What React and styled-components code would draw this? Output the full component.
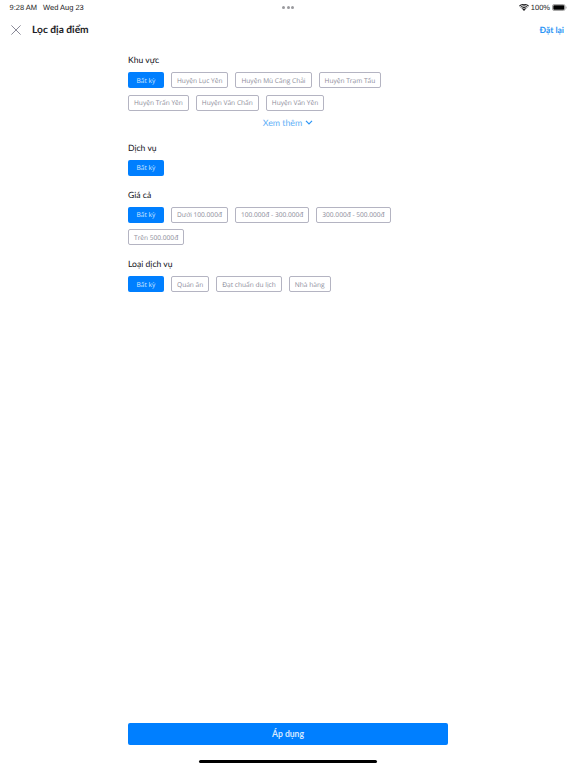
import React from "react";
import styled, { createGlobalStyle } from "styled-components";

const Global = createGlobalStyle`
  html, body { margin: 0; padding: 0; background: #fff; }
  body { font-family: "Lato", "Open Sans", sans-serif; text-rendering: geometricPrecision; }
  * { box-sizing: border-box; }
`;

const Page = styled.div`
  position: relative;
  width: 576px;
  height: 768px;
  display: flex;
  flex-direction: column;
  background: #fff;
  overflow: hidden;
`;

const StatusBar = styled.div`
  height: 14px;
  padding: 0 9px 0 9.5px;
  display: grid;
  grid-template-columns: 1fr auto 1fr;
  align-items: center;
  font-family: "Liberation Sans", sans-serif;
  font-size: 7.5px;
  color: #1c1c1e;
`;

const StatusLeft = styled.div`
  display: flex;
  gap: 6px;
`;

const StatusRight = styled.div`
  display: flex;
  justify-content: flex-end;
  align-items: center;
  gap: 2px;
`;

const Dots = styled.div`
  display: flex;
  gap: 1.5px;
`;

const Dot = styled.span`
  width: 3px;
  height: 3px;
  border-radius: 50%;
  background: #9a9a9e;
`;

const Header = styled.header`
  height: 31px;
  padding: 0 12px 0 11px;
  display: flex;
  align-items: center;
`;

const CloseButton = styled.span`
  display: flex;
  width: 10px;
  height: 10px;
  margin-right: 11px;
`;

const Title = styled.h1`
  flex: 1;
  margin: 0;
  font-size: 10.2px;
  font-weight: 700;
  color: #1d1d26;
`;

const Reset = styled.span`
  font-size: 8.5px;
  font-weight: 700;
  color: #2b95f5;
`;

const Content = styled.main`
  width: 320px;
  margin: 0 auto;
  padding-top: 9px;
  flex: 1;
`;

const Section = styled.section`
  margin-bottom: 13px;
`;

const SectionTitle = styled.h2`
  margin: 0 0 6px;
  font-size: 8.6px;
  line-height: 12px;
  font-weight: 400;
  color: #14141c;
`;

const Chips = styled.div`
  display: flex;
  flex-wrap: wrap;
  gap: 6.5px 7px;
`;

const Chip = styled.span`
  height: 16px;
  padding: 0 ${(p) => (p.$active ? "0" : "5px")};
  min-width: 36px;
  display: inline-flex;
  align-items: center;
  justify-content: center;
  border-radius: 2px;
  font-family: "Open Sans", sans-serif;
  font-size: 6.6px;
  white-space: nowrap;
  background: ${(p) => (p.$active ? "#007fff" : "#fff")};
  color: ${(p) => (p.$active ? "#d6e9ff" : "#8b8b99")};
  border: ${(p) => (p.$active ? "none" : "1px solid #b4b4c2")};
`;

const More = styled.div`
  margin-top: 6px;
  display: flex;
  justify-content: center;
  align-items: center;
  gap: 3px;
  height: 12px;
  font-size: 8.8px;
  color: #5fb0f7;
`;

const Footer = styled.footer`
  width: 320px;
  margin: 0 auto 23px;
`;

const Apply = styled.button`
  width: 100%;
  height: 22px;
  padding: 0;
  border: none;
  border-radius: 2px;
  background: #007fff;
  color: #d6e9ff;
  font-family: inherit;
  font-size: 8.6px;
  font-weight: 700;
`;

const HomeIndicator = styled.div`
  position: absolute;
  left: 199px;
  top: 760px;
  width: 178px;
  height: 3px;
  border-radius: 2px;
  background: #000;
`;

const sections = [
  { title: "Khu vực", more: true, chips: ["Huyện Lục Yên", "Huyện Mù Căng Chải", "Huyện Trạm Tấu", "Huyện Trấn Yên", "Huyện Văn Chấn", "Huyện Văn Yên"] },
  { title: "Dịch vụ", chips: [] },
  { title: "Giá cả", chips: ["Dưới 100.000đ", "100.000đ - 300.000đ", "300.000đ - 500.000đ", "Trên 500.000đ"] },
  { title: "Loại dịch vụ", chips: ["Quán ăn", "Đạt chuẩn du lịch", "Nhà hàng"] },
];

export default function App() {
  return (
    <Page>
      <Global />
      <StatusBar>
        <StatusLeft>
          <span>9:28 AM</span>
          <span>Wed Aug 23</span>
        </StatusLeft>
        <Dots>
          <Dot />
          <Dot />
          <Dot />
        </Dots>
        <StatusRight>
          <svg width="10" height="7" viewBox="0 0 10 7">
            <path d="M5 7 3.4 5.2a2.4 2.4 0 0 1 3.2 0Z" fill="#1c1c1e" />
            <path d="M2.5 4.2a3.8 3.8 0 0 1 5 0l-.6.7a3 3 0 0 0-3.8 0Z" fill="#1c1c1e" />
            <path d="M1.3 3A5.6 5.6 0 0 1 8.7 3l-.6.7a4.7 4.7 0 0 0-6.2 0Z" fill="#1c1c1e" />
            <path d="M0 1.8A7.5 7.5 0 0 1 10 1.8l-.6.7a6.6 6.6 0 0 0-8.8 0Z" fill="#1c1c1e" />
          </svg>
          <span>100%</span>
          <svg width="15" height="7" viewBox="0 0 15 7">
            <rect x=".5" y=".5" width="12.5" height="6" rx="1.5" fill="none" stroke="#a8a8a8" />
            <rect x="1.3" y="1.3" width="11" height="4.4" rx=".8" fill="#000" />
            <rect x="13.6" y="2.5" width="1" height="2" rx=".5" fill="#a8a8a8" />
          </svg>
        </StatusRight>
      </StatusBar>
      <Header>
        <CloseButton>
          <svg width="10" height="10" viewBox="0 0 10 10">
            <path d="M.4.4l9.2 9.2M9.6.4.4 9.6" stroke="#7d7d8c" strokeWidth=".9" fill="none" />
          </svg>
        </CloseButton>
        <Title>Lọc địa điểm</Title>
        <Reset>Đặt lại</Reset>
      </Header>
      <Content>
        {sections.map((s) => (
          <Section key={s.title}>
            <SectionTitle>{s.title}</SectionTitle>
            <Chips>
              <Chip $active>Bất kỳ</Chip>
              {s.chips.map((c) => (
                <Chip key={c}>{c}</Chip>
              ))}
            </Chips>
            {s.more && (
              <More>
                Xem thêm
                <svg width="8" height="5" viewBox="0 0 8 5">
                  <path d="M1 .8 4 3.8 7 .8" stroke="#2b95f5" strokeWidth="1.2" fill="none" />
                </svg>
              </More>
            )}
          </Section>
        ))}
      </Content>
      <Footer>
        <Apply>Áp dụng</Apply>
      </Footer>
      <HomeIndicator />
    </Page>
  );
}
